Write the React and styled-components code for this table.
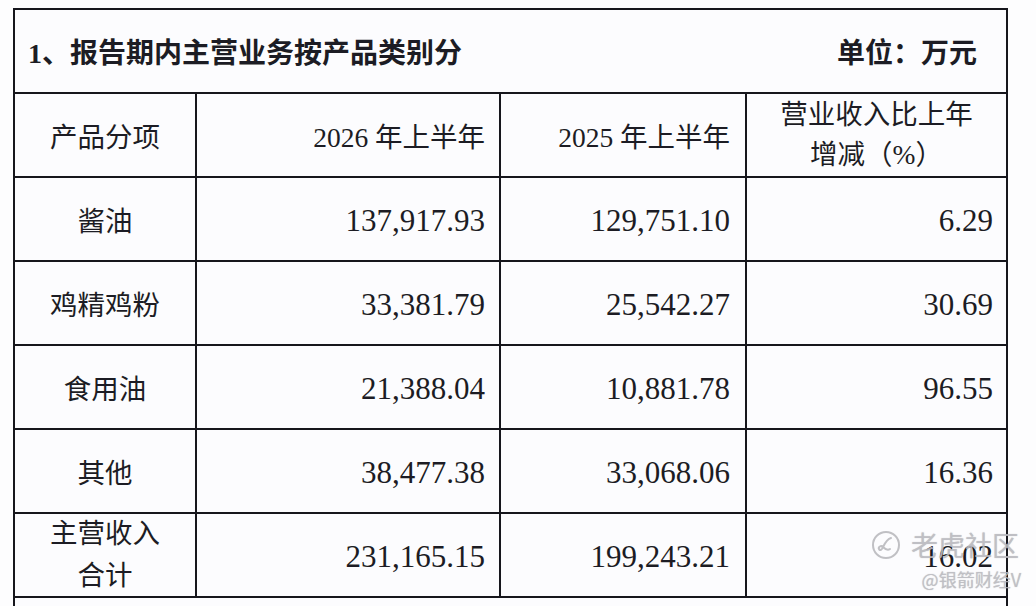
import React from "react";
import styled, { createGlobalStyle } from "styled-components";

const Global = createGlobalStyle`
  html, body { margin: 0; padding: 0; background: #fdfdfe; }
  body { width: 1036px; height: 606px; overflow: hidden; }
  #root { width: 1036px; height: 606px; }
`;

const Page = styled.div`
  position: relative;
  width: 1036px;
  height: 606px;
  overflow: hidden;
  padding: 8px 0 0 13px;
  box-sizing: border-box;
  background: #fdfdfe;
  font-family: "Liberation Serif", "Noto Sans CJK SC", serif;
  color: #1c1c24;
`;

const Grid = styled.div`
  display: grid;
  grid-template-columns: 180px 302px 244px 259px;
  grid-auto-rows: 82px;
  gap: 2px;
  padding: 2px;
  width: 995px;
  box-sizing: border-box;
  background: #16161c;
`;

const TitleCell = styled.div`
  grid-column: 1 / -1;
  background: #fcfcfe;
  display: flex;
  align-items: center;
  justify-content: space-between;
  padding: 0 29px 0 13px;
  font-size: 28px;
  font-weight: 700;
`;

const Cell = styled.div`
  background: #fcfcfe;
  display: flex;
  flex-direction: column;
  justify-content: center;
  align-items: ${(p) => (p.$align === "right" ? "flex-end" : "center")};
  padding: ${(p) => (p.$align === "right" ? `0 ${p.$pr || 14}px 0 0` : "0")};
  font-size: ${(p) => (p.$num ? "31px" : "27.5px")};
  line-height: ${(p) => p.$lh || "normal"};
  text-align: center;
  padding-top: ${(p) => (p.$num ? "4px" : "0")};
`;

const Tail = styled.div`
  grid-column: 1 / -1;
  background: #fcfcfe;
  height: 20px;
`;

const Mark = styled.div`
  position: absolute;
  left: 871px;
  top: 528px;
  display: flex;
  flex-direction: column;
  align-items: flex-end;
  gap: 6px;
  pointer-events: none;
  font-family: "Noto Sans CJK SC", sans-serif;
  color: rgba(190, 190, 196, 0.85);
  text-shadow: 0 0 1px rgba(90, 90, 90, 0.35);
`;

const MarkTop = styled.div`
  display: flex;
  align-items: center;
  gap: 10px;
  font-size: 27px;
  line-height: 34px;
`;

const MarkSub = styled.div`
  font-size: 18px;
  line-height: 22px;
  margin-right: -2px;
`;

const Logo = () => (
  <svg width="30" height="30" viewBox="0 0 30 30">
    <circle cx="15" cy="15" r="13" fill="none" stroke="rgba(185,185,190,0.9)" strokeWidth="2" />
    <path
      d="M20 8 C16 9 14 13 12 17 C11 20 9 21 8 19 C7 17 10 15 12 17 C14 19 16 21 19 19"
      fill="none"
      stroke="rgba(185,185,190,0.9)"
      strokeWidth="2"
      strokeLinecap="round"
    />
  </svg>
);

const rows = [
  ["酱油", "137,917.93", "129,751.10", "6.29"],
  ["鸡精鸡粉", "33,381.79", "25,542.27", "30.69"],
  ["食用油", "21,388.04", "10,881.78", "96.55"],
  ["其他", "38,477.38", "33,068.06", "16.36"],
];

export default function App() {
  return (
    <>
      <Global />
      <Page>
        <Grid>
          <TitleCell>
            <span>1、报告期内主营业务按产品类别分</span>
            <span>单位：万元</span>
          </TitleCell>
          <Cell>产品分项</Cell>
          <Cell $align="right" $pr={14}>2026 年上半年</Cell>
          <Cell $align="right" $pr={15}>2025 年上半年</Cell>
          <Cell $lh="40px">
            <span>营业收入比上年</span>
            <span>增减（%）</span>
          </Cell>
          {rows.map((r) => (
            <React.Fragment key={r[0]}>
              <Cell>{r[0]}</Cell>
              <Cell $align="right" $num $pr={14}>{r[1]}</Cell>
              <Cell $align="right" $num $pr={15}>{r[2]}</Cell>
              <Cell $align="right" $num $pr={13}>{r[3]}</Cell>
            </React.Fragment>
          ))}
          <Cell $lh="42px">
            <span>主营收入</span>
            <span>合计</span>
          </Cell>
          <Cell $align="right" $num $pr={14}>231,165.15</Cell>
          <Cell $align="right" $num $pr={15}>199,243.21</Cell>
          <Cell $align="right" $num $pr={13}>16.02</Cell>
          <Tail />
        </Grid>
        <Mark>
          <MarkTop>
            <Logo />
            <span>老虎社区</span>
          </MarkTop>
          <MarkSub>@银箭财经V</MarkSub>
        </Mark>
      </Page>
    </>
  );
}
